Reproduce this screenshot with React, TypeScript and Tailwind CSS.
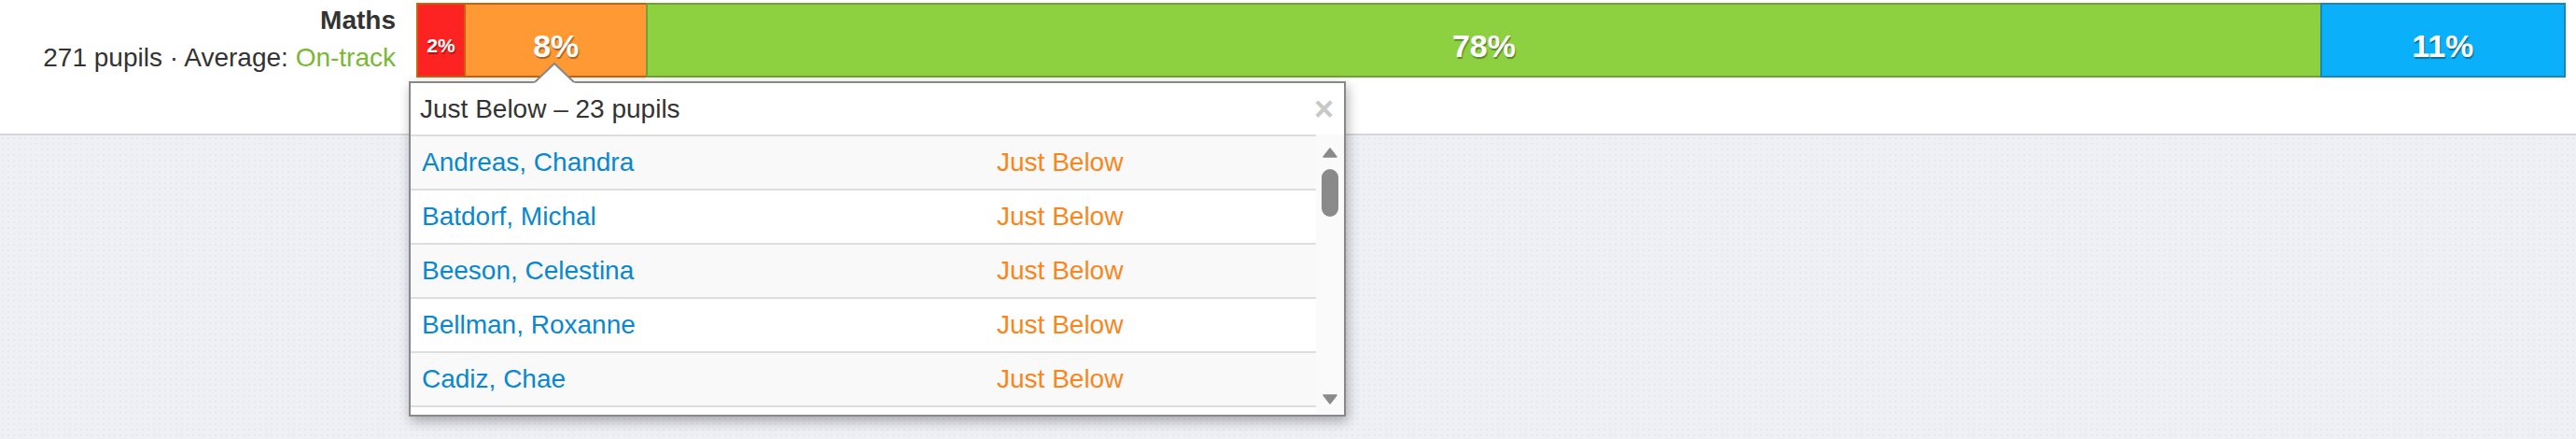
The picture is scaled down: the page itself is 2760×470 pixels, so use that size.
import React from "react";

// Attainment bands for the subject bar (counts out of 271 pupils)
const TOTAL = 271;
const BANDS = [
  { label: "2%", count: 6, bg: "bg-[#fe2323]", border: "border-[#c8620c]", small: true },
  { label: "8%", count: 23, bg: "bg-[#fe9934]", border: "border-[#c8620c]", small: false },
  { label: "78%", count: 211, bg: "bg-[#8ed140]", border: "border-[#74a03b]", small: false },
  { label: "11%", count: 31, bg: "bg-[#0ab1fa]", border: "border-[#1a86ba]", small: false },
];

const PUPILS = [
  "Andreas, Chandra",
  "Batdorf, Michal",
  "Beeson, Celestina",
  "Bellman, Roxanne",
  "Cadiz, Chae",
];

const Triangle = ({ up }: { up: boolean }) => (
  <svg width="16" height="11" viewBox="0 0 16 11">
    <path
      d={up ? "M8 1 L15 10 L1 10 Z" : "M1 1 L15 1 L8 10 Z"}
      fill="#8a8a8a"
      stroke="#8a8a8a"
      strokeWidth="1.5"
      strokeLinejoin="round"
    />
  </svg>
);

export default function App() {
  return (
    <div className="relative w-full h-[470px] flex flex-col font-['Liberation_Sans',Arial,sans-serif] text-[#333]">
      {/* Subject row */}
      <div className="h-[145px] bg-white border-b-2 border-[#d6d6d6] flex items-start pr-[11px]">
        <div className="w-[424px] text-right text-[28px] leading-[40px] pt-[2px]">
          <div className="font-bold">Maths</div>
          <div>
            271 pupils · Average: <span className="text-[#7ab834]">On-track</span>
          </div>
        </div>
        <div className="ml-[22px] mt-[3px] h-[80px] flex-1 flex">
          {BANDS.map((b, i) => (
            <div
              key={b.label}
              style={{ width: `${(b.count / TOTAL) * 100}%` }}
              className={`${b.bg} ${b.border} shrink-0 border-y-2 border-l-2 ${
                i === BANDS.length - 1 ? "border-r-2" : ""
              } flex justify-center items-center text-white font-bold [text-shadow:1px_2px_1px_rgba(0,0,0,0.35)] ${
                b.small ? "text-[21px] pt-[11px]" : "text-[34px] pt-[13px]"
              }`}
            >
              {b.label}
            </div>
          ))}
        </div>
      </div>

      {/* Page background */}
      <div className="flex-1 bg-[#efeff6] bg-[radial-gradient(#e7e7ef_1px,transparent_1px)] bg-[length:6px_6px]" />

      {/* Pupil list popover */}
      <div className="absolute left-[438px] top-[87px] w-[1004px] h-[359px] bg-white border-2 border-[#888] shadow-[2px_5px_12px_rgba(0,0,0,0.3)] flex flex-col">
        <div className="h-[55px] flex items-center justify-between pl-[10px] pr-[11px] text-[28px]">
          <span>Just Below – 23 pupils</span>
          <span className="text-[#c8c8c8] font-bold text-[36px] leading-none">×</span>
        </div>
        <div className="flex-1 flex overflow-hidden">
          <div className="flex-1 border-t-2 border-[#ddd] overflow-hidden">
            {PUPILS.map((name, i) => (
              <div
                key={name}
                className={`h-[58px] border-b-2 border-[#ddd] flex items-center pl-[12px] text-[28px] ${
                  i % 2 === 0 ? "bg-[#f9f9f9]" : "bg-white"
                }`}
              >
                <span className="w-[616px] text-[#0788d0]">{name}</span>
                <span className="text-[#fb8519]">Just Below</span>
              </div>
            ))}
            <div className="h-[58px] bg-white" />
          </div>
          <div className="w-[30px] bg-[#fafafa] flex flex-col items-center pt-[14px] pb-[11px]">
            <Triangle up />
            <div className="mt-[12px] w-[18px] h-[51px] rounded-full bg-[#8a8a8a]" />
            <div className="mt-auto">
              <Triangle up={false} />
            </div>
          </div>
        </div>
      </div>

      {/* Caret pointing at the orange band */}
      <svg className="absolute left-[572px] top-[66px]" width="44" height="23" viewBox="0 0 44 23">
        <polygon points="0,23 22,2 44,23" fill="white" />
        <polyline points="1,22 22,2 43,22" fill="none" stroke="#888" strokeWidth="2" />
      </svg>
    </div>
  );
}
